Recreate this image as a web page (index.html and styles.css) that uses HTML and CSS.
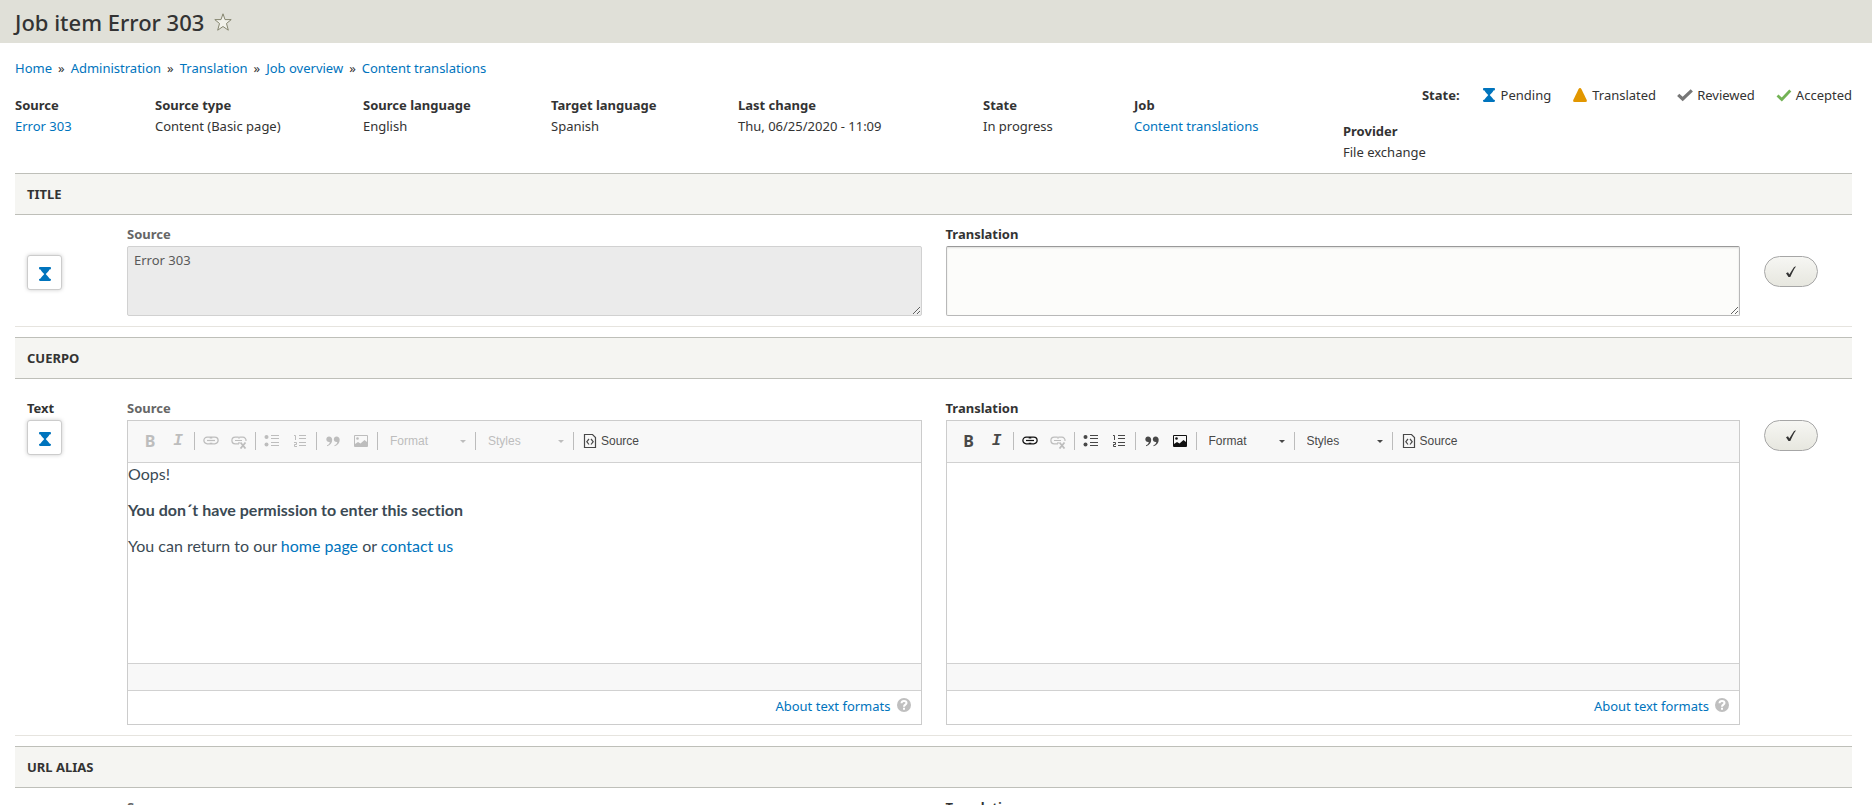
FILE: index.html
```
<!DOCTYPE html>
<html lang="en">
<head>
    <title>Job item Error 303</title>
    <meta charset="utf-8">
    <meta name="viewport" content="width=device-width, initial-scale=1">
    <link rel="stylesheet" href="styles.css">
</head>
<body>
    <!-- Shared icons -->
    <svg class="sprite" aria-hidden="true">
        <symbol id="pending" viewBox="0 0 16 16"><path fill="#0074bd" d="M3.2 1h9.6c.9 0 1.2.5 1.2 1.200c0 .8-.6 1.200-1.500 1.300C11.500 5.500 9.500 7 8.800 8c.7 1.100 2.700 2.600 3.700 4.500.9.100 1.500.6 1.500 1.300S13.700 15 12.800 15H3.200C2.300 15 2 14.500 2 13.800s.6-1.200 1.500-1.300C4.500 10.600 6.500 9.100 7.200 8 6.500 7 4.500 5.500 3.500 3.500 2.600 3.400 2 3 2 2.200 2 1.500 2.300 1 3.200 1z"/></symbol>
        <symbol id="translated" viewBox="0 0 16 16"><path fill="#e29700" d="M8 1c.7 0 1.100.4 1.500 1.200l5 10.300c.8 1.700.3 2.500-1 2.500h-11c-1.300 0-1.800-.8-1-2.500l5-10.300C6.900 1.400 7.300 1 8 1z"/></symbol>
        <symbol id="reviewed" viewBox="0 0 16 16"><path fill="none" stroke="#777" stroke-width="3.200" d="M1.200 7.800l4.500 4.200L14.800 3.300"/></symbol>
        <symbol id="accepted" viewBox="0 0 16 16"><path fill="none" stroke="#73b355" stroke-width="2.800" d="M1.500 8.500l4.300 4L14.300 3.500"/></symbol>
        <symbol id="check" viewBox="0 0 12 12"><path fill="currentColor" d="M1 7.200l2-.9 1.300 2.200L8.700 1.400C9.400.6 10 .5 11 .5 8.700 3.300 7 7.300 5.300 11H3.500z"/></symbol>
        <symbol id="link" viewBox="0 0 16 16"><g fill="none" stroke="currentColor"><path stroke-width="1.300" d="M8.700 5.500V5.200a1 1 0 0 0-1-1H4.200a3.300 3.300 0 0 0 0 6.600h3.500a1 1 0 0 0 1-1M7.300 5.500v-.3a1 1 0 0 1 1-1h3.500a3.300 3.300 0 0 1 0 6.600H8.300a1 1 0 0 1-1-1"/><path stroke-width="1.200" d="M4 7.500h8"/></g></symbol>
        <symbol id="unlink" viewBox="0 0 16 16"><g fill="none" stroke="currentColor"><path stroke-width="1.200" d="M8 10.800H4.200a3.300 3.300 0 0 1 0-6.600h3.500M8.300 4.200h3.500A3.200 3.200 0 0 1 15 8M4 7.500h7M8 4.200v1.500M8 9v1.800"/><path stroke-width="1.800" d="M9.500 9.500l5 6M14.500 9.500l-5 6"/></g></symbol>
        <symbol id="bullets" viewBox="0 0 16 16"><g fill="currentColor"><circle cx="2.500" cy="4" r="2"/><circle cx="2.500" cy="11.500" r="2"/><path d="M7 2h8v1H7zM7 5h8v1H7zM7 9h8v1H7zM7 12h8v1H7z"/></g></symbol>
        <symbol id="numbers" viewBox="0 0 16 16"><path fill="currentColor" d="M7 2h7v1H7zM7 5h7v1H7zM7 9h7v1H7zM7 12h7v1H7z"/><path fill="none" stroke="currentColor" d="M2 2.500h1.500V7M2 9.500h2.500v2h-2v2H5"/></symbol>
        <symbol id="quote" viewBox="0 0 16 16"><path fill="currentColor" d="M4 3.500c2 0 3.200 1.300 3.200 3.300 0 3-1.800 5.500-5.200 6.400v-1c1.700-.6 2.700-1.800 2.800-3.200C2.600 9.300 1.300 8 1.300 6.300 1.300 4.700 2.500 3.500 4 3.500zM11.500 3.500c2 0 3.200 1.300 3.200 3.300 0 3-1.800 5.500-5.200 6.400v-1c1.700-.6 2.700-1.800 2.800-3.200C10.100 9.300 8.800 8 8.800 6.300c0-1.600 1.200-2.800 2.700-2.800z"/></symbol>
        <symbol id="image" viewBox="0 0 16 16"><path fill="none" stroke="currentColor" d="M1.500 2.500h13v11h-13z"/><circle fill="currentColor" cx="4.500" cy="5.500" r="1.300"/><path fill="currentColor" d="M2 13v-2l3-2 2.500 1.500L11.500 7l2.500 2v4z"/></symbol>
        <symbol id="source" viewBox="0 0 16 16"><path fill="none" stroke="currentColor" stroke-width="1.200" d="M2.500 1.500h8l3 3v10h-11zM7 6L4.800 8.700 7 11.500M9 6l2.200 2.700L9 11.500"/></symbol>
        <symbol id="help" viewBox="0 0 14 14"><circle fill="#bfbfbf" cx="7" cy="7" r="7"/><path fill="none" stroke="#fff" stroke-width="2" d="M4.500 5.300C4.600 3.800 5.600 3 7 3s2.500.8 2.500 2.100C9.500 6.700 7 6.600 7 8.700M7 9.700v2"/></symbol>
    </svg>

    <header class="page-header">
        <h1>Job item Error 303</h1>
        <button class="star" type="button" aria-label="Add to shortcuts">
            <svg viewBox="0 0 18 18"><path fill="#f1f1ea" stroke="#85856f" d="M9 .8l2 5.800h6.200l-4.700 3.900 1.800 6.700L9 13.500l-5.300 3.700 1.800-6.700L.8 6.600H7z"/></svg>
        </button>
    </header>

    <main class="page">
        <nav class="breadcrumb" aria-label="Breadcrumb">
            <a href="#">Home</a> » <a href="#">Administration</a> » <a href="#">Translation</a> » <a href="#">Job overview</a> » <a href="#">Content translations</a>
        </nav>

        <div class="info">
            <div class="meta">
                <div><b>Source</b><a href="#">Error 303</a></div>
                <div><b>Source type</b>Content (Basic page)</div>
                <div><b>Source language</b>English</div>
                <div><b>Target language</b>Spanish</div>
                <div><b>Last change</b>Thu, 06/25/2020 - 11:09</div>
                <div><b>State</b>In progress</div>
                <div><b>Job</b><a href="#">Content translations</a></div>
            </div>
            <div class="side">
                <div class="legend">
                    <b>State:</b>
                    <span><svg class="icon"><use href="#pending"/></svg>Pending</span>
                    <span><svg class="icon"><use href="#translated"/></svg>Translated</span>
                    <span><svg class="icon"><use href="#reviewed"/></svg>Reviewed</span>
                    <span><svg class="icon"><use href="#accepted"/></svg>Accepted</span>
                </div>
                <div class="provider"><b>Provider</b>File exchange</div>
            </div>
        </div>

        <section class="group">
            <h2>TITLE</h2>
            <div class="row">
                <div class="status"><button class="state-btn" type="button" aria-label="Pending"><svg class="icon"><use href="#pending"/></svg></button></div>
                <div class="field">
                    <label class="muted" for="title-source">Source</label>
                    <textarea id="title-source" disabled>Error 303</textarea>
                </div>
                <div class="field">
                    <label for="title-translation">Translation</label>
                    <textarea id="title-translation"></textarea>
                </div>
                <div class="action"><button class="check-btn" type="button" aria-label="Mark as reviewed"><svg><use href="#check"/></svg></button></div>
            </div>
        </section>

        <section class="group">
            <h2>CUERPO</h2>
            <div class="row row-editor">
                <div class="status"><b>Text</b><button class="state-btn" type="button" aria-label="Pending"><svg class="icon"><use href="#pending"/></svg></button></div>
                <div class="field">
                    <span class="label muted" id="body-source">Source</span>
                    <div class="editor">
                        <div class="toolbar">
                            <button class="tool bold" type="button" disabled>B</button>
                            <button class="tool italic" type="button" disabled>I</button>
                            <i class="sep"></i>
                            <button class="tool" type="button" aria-label="Link" disabled><svg class="icon"><use href="#link"/></svg></button>
                            <button class="tool" type="button" aria-label="Unlink" disabled><svg class="icon"><use href="#unlink"/></svg></button>
                            <i class="sep"></i>
                            <button class="tool" type="button" aria-label="Bulleted list" disabled><svg class="icon"><use href="#bullets"/></svg></button>
                            <button class="tool" type="button" aria-label="Numbered list" disabled><svg class="icon"><use href="#numbers"/></svg></button>
                            <i class="sep"></i>
                            <button class="tool" type="button" aria-label="Block quote" disabled><svg class="icon"><use href="#quote"/></svg></button>
                            <button class="tool" type="button" aria-label="Image" disabled><svg class="icon"><use href="#image"/></svg></button>
                            <i class="sep"></i>
                            <span class="combo off"><select aria-label="Format" disabled><option>Format</option></select></span>
                            <i class="sep"></i>
                            <span class="combo off"><select aria-label="Styles" disabled><option>Styles</option></select></span>
                            <i class="sep"></i>
                            <button class="tool tool-text" type="button"><svg class="icon"><use href="#source"/></svg>Source</button>
                        </div>
                        <div class="content" role="textbox" aria-labelledby="body-source" aria-readonly="true">
                            <p>Oops!</p>
                            <p><strong>You don´t have permission to enter this section</strong></p>
                            <p>You can return to our <a href="#">home page</a> or <a href="#">contact us</a></p>
                        </div>
                        <div class="bottom"></div>
                        <div class="formats"><a href="#">About text formats</a><svg><use href="#help"/></svg></div>
                    </div>
                </div>
                <div class="field">
                    <span class="label" id="body-translation">Translation</span>
                    <div class="editor">
                        <div class="toolbar">
                            <button class="tool bold" type="button">B</button>
                            <button class="tool italic" type="button">I</button>
                            <i class="sep"></i>
                            <button class="tool dark" type="button" aria-label="Link"><svg class="icon"><use href="#link"/></svg></button>
                            <button class="tool" type="button" aria-label="Unlink" disabled><svg class="icon"><use href="#unlink"/></svg></button>
                            <i class="sep"></i>
                            <button class="tool" type="button" aria-label="Bulleted list"><svg class="icon"><use href="#bullets"/></svg></button>
                            <button class="tool" type="button" aria-label="Numbered list"><svg class="icon"><use href="#numbers"/></svg></button>
                            <i class="sep"></i>
                            <button class="tool" type="button" aria-label="Block quote"><svg class="icon"><use href="#quote"/></svg></button>
                            <button class="tool dark" type="button" aria-label="Image"><svg class="icon"><use href="#image"/></svg></button>
                            <i class="sep"></i>
                            <span class="combo"><select aria-label="Format"><option>Format</option></select></span>
                            <i class="sep"></i>
                            <span class="combo"><select aria-label="Styles"><option>Styles</option></select></span>
                            <i class="sep"></i>
                            <button class="tool tool-text" type="button"><svg class="icon"><use href="#source"/></svg>Source</button>
                        </div>
                        <div class="content" role="textbox" aria-labelledby="body-translation" contenteditable="true"></div>
                        <div class="bottom"></div>
                        <div class="formats"><a href="#">About text formats</a><svg><use href="#help"/></svg></div>
                    </div>
                </div>
                <div class="action"><button class="check-btn" type="button" aria-label="Mark as reviewed"><svg><use href="#check"/></svg></button></div>
            </div>
        </section>

        <section class="group">
            <h2>URL ALIAS</h2>
            <div class="row">
                <div class="status"><button class="state-btn" type="button" aria-label="Pending"><svg class="icon"><use href="#pending"/></svg></button></div>
                <div class="field">
                    <label class="muted" for="alias-source">Source</label>
                    <textarea id="alias-source" disabled></textarea>
                </div>
                <div class="field">
                    <label for="alias-translation">Translation</label>
                    <textarea id="alias-translation"></textarea>
                </div>
                <div class="action"><button class="check-btn" type="button" aria-label="Mark as reviewed"><svg><use href="#check"/></svg></button></div>
            </div>
        </section>
    </main>
</body>
</html>
```
FILE: styles.css
```
* { box-sizing: border-box; }
body {
    margin: 0;
    background: #fff;
    color: #333;
    font: 13px/20px "Noto Sans", "Open Sans", sans-serif;
}
a { color: #0074bd; text-decoration: none; }
button, textarea, select { font: inherit; color: inherit; }
button { cursor: pointer; }
.sprite { display: none; }
.icon { width: 16px; height: 16px; flex: none; }

.page-header {
    display: flex;
    align-items: center;
    gap: 10px;
    height: 43px;
    padding: 0 15px;
    background: #e0e0d8;
}
h1 { margin: 0; font-size: 22px; font-weight: 500; line-height: 24px; }
.star { width: 18px; height: 18px; padding: 0; border: 0; background: none; }
.star svg { display: block; width: 18px; height: 18px; }

.page { padding: 15px 20px 20px 15px; }
.breadcrumb { display: flex; gap: 6px; }

.info { display: flex; margin-bottom: 10px; }
.meta {
    display: grid;
    grid-template-columns: 140px 208px 188px 187px 245px 151px 209px;
    padding-top: 17px;
    line-height: 21px;
}
.meta b, .provider b { display: block; }
.side { flex: 1; padding-top: 7px; }
.legend {
    display: flex;
    justify-content: flex-end;
    gap: 21px;
    white-space: nowrap;
}
.legend span { display: flex; align-items: center; gap: 4px; }
.provider { margin-top: 16px; line-height: 21px; }

.group { margin-bottom: 10px; }
h2 {
    margin: 0;
    padding: 10px 12px;
    border: 1px solid #bebfb9;
    border-width: 1px 0;
    background: #f5f5f2;
    font-size: 13px;
    line-height: 20px;
}
.row {
    display: grid;
    grid-template-columns: 76px 1fr 1fr 76px;
    gap: 24px;
    padding: 9px 12px 10px;
    border-bottom: 1px solid #e6e4df;
}
.row-editor { padding-top: 19px; }
.status { padding-top: 31px; }
.action { padding-top: 32px; }
.status b { display: block; margin-bottom: 2px; }
.row-editor .status { padding-top: 0; }
.row-editor .action { padding-top: 22px; }
label, .label { display: block; margin-bottom: 2px; font-weight: bold; }
.muted { color: #666; }

.state-btn {
    display: flex;
    align-items: center;
    justify-content: center;
    width: 35px;
    height: 35px;
    padding: 3px 0 0;
    border: 1px solid #ccc;
    border-radius: 3px;
    background: #fff;
    box-shadow: 0 0 4px rgba(0,0,0,0.2);
}
.check-btn {
    display: flex;
    align-items: center;
    justify-content: center;
    width: 54px;
    height: 31px;
    padding: 0;
    border: 1px solid #a6a6a6;
    border-radius: 16px;
    background: linear-gradient(#f6f6f3, #e7e7df);
}
.check-btn svg { width: 12px; height: 12px; }

textarea {
    display: block;
    width: 100%;
    height: 70px;
    padding: 3px 6px;
    border: 1px solid #b8b8b8;
    border-top-color: #999;
    border-radius: 2px;
    background: #fcfcfa;
    box-shadow: inset 0 1px 2px rgba(0,0,0,0.12);
    resize: vertical;
}
textarea:disabled {
    border-color: #d1d1d1;
    background: #ebebeb;
    color: #595959;
    box-shadow: none;
}

.editor { border: 1px solid #ccc; }
.toolbar {
    display: flex;
    align-items: center;
    height: 42px;
    padding: 6px 8px 7px;
    border-bottom: 1px solid #d1d1d1;
    background: #f8f8f8;
    color: #484848;
    font: 12px/16px "Liberation Sans", Arial, sans-serif;
}
.tool {
    display: flex;
    align-items: center;
    justify-content: center;
    gap: 3px;
    width: 28px;
    height: 28px;
    padding: 0;
    border: 0;
    background: none;
}
.tool:disabled, .off { color: #bdbdbd; }
.dark { color: #111; }
.bold { font: bold 16px/16px "Noto Sans", sans-serif; }
.italic { font: italic bold 16px/16px "Liberation Mono", monospace; }
.tool-text { width: auto; padding: 0 6px; }
.sep { width: 1px; height: 18px; margin: 0 2px; background: #bcbcbc; }
.combo { position: relative; width: 93px; }
.combo select {
    appearance: none;
    width: 100%;
    padding: 0 10px;
    border: 0;
    background: none;
    opacity: 1;
}
.combo::after {
    content: "";
    position: absolute;
    top: 7px;
    right: 7px;
    border: 3px solid transparent;
    border-top-color: currentColor;
    pointer-events: none;
}
.content {
    height: 200px;
    padding-top: 1px;
    color: #3b4a54;
    font: 16px/20px Lato, sans-serif;
    font-variant-ligatures: none;
}
.content p { margin: 0 0 16px; }
.bottom {
    height: 28px;
    border: 1px solid #d1d1d1;
    border-width: 1px 0;
    background: #f8f8f8;
}
.formats {
    display: flex;
    justify-content: flex-end;
    gap: 6px;
    padding: 5px 10px 8px;
}
.formats svg { width: 14px; height: 14px; margin-top: 2px; }
```
